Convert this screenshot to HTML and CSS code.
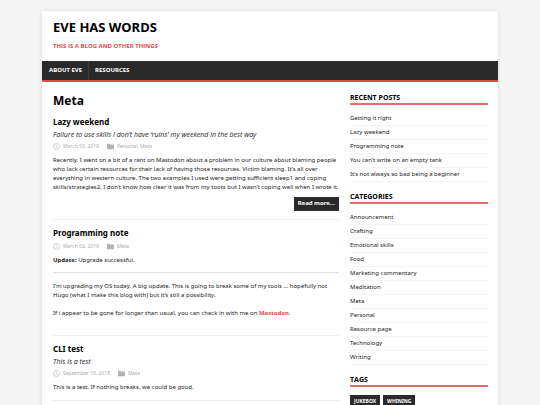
FILE: index.html
```html
<!DOCTYPE html>
<html lang="en">
<head>
    <meta charset="UTF-8">
    <meta name="viewport" content="width=device-width, initial-scale=1">
    <title>Meta - Eve has words</title>
    <link rel="stylesheet" href="styles.css">
</head>
<body>
    <svg class="sprite" aria-hidden="true">
        <symbol id="icon-time" viewBox="0 0 16 16">
            <circle cx="8" cy="8" r="7" fill="none" stroke="currentColor" stroke-width="1.4"/>
            <path d="M7.5 3.5v5l3.5 2" fill="none" stroke="currentColor" stroke-width="1.4"/>
        </symbol>
        <symbol id="icon-folder" viewBox="0 0 16 16">
            <path d="M0 2.5a1 1 0 0 1 1-1h5l1.5 2H15a1 1 0 0 1 1 1v9a1 1 0 0 1-1 1H1a1 1 0 0 1-1-1z" fill="currentColor"/>
        </symbol>
    </svg>

    <div class="container">
        <header class="header">
            <a class="logo" href="/">
                <div class="logo_title">Eve has words</div>
                <div class="logo_tagline">This is a blog and other things</div>
            </a>
            <nav class="menu">
                <a class="menu_link" href="/about/">About Eve</a>
                <a class="menu_link" href="/resources/">Resources</a>
            </nav>
        </header>

        <div class="wrapper">
            <main class="main">
                <h1 class="main_title">Meta</h1>

                <article class="post">
                    <h2 class="post_title"><a href="/lazy-weekend/">Lazy weekend</a></h2>
                    <p class="post_lead">Failure to use skills I don’t have ‘ruins’ my weekend in the best way</p>
                    <div class="meta">
                        <span class="meta_item"><svg class="icon"><use href="#icon-time"/></svg><time datetime="2019-03-10">March 10, 2019</time></span>
                        <span class="meta_item"><svg class="icon"><use href="#icon-folder"/></svg><span><a href="/personal/">Personal</a>, <a href="/meta/">Meta</a></span></span>
                    </div>
                    <div class="content">Recently, I went on a bit of a rant on Mastodon about a problem in our culture about blaming people who lack certain resources for their lack of having those resources. Victim blaming. It’s all over everything in western culture. The two examples I used were getting sufficient sleep1 and coping skills/strategies2. I don’t know how clear it was from my toots but I wasn’t coping well when I wrote it.</div>
                    <div class="more"><a class="btn" href="/lazy-weekend/">Read more…</a></div>
                </article>

                <article class="post">
                    <h2 class="post_title"><a href="/programming-note/">Programming note</a></h2>
                    <div class="meta">
                        <span class="meta_item"><svg class="icon"><use href="#icon-time"/></svg><time datetime="2019-03-02">March 02, 2019</time></span>
                        <span class="meta_item"><svg class="icon"><use href="#icon-folder"/></svg><a href="/meta/">Meta</a></span>
                    </div>
                    <div class="content content_note">
                        <p><strong>Update:</strong> Upgrade successful.</p>
                        <hr>
                        <p>I’m upgrading my OS today. A big update. This is going to break some of my tools … hopefully not Hugo (what I make this blog with) but it’s still a possibility.</p>
                        <p>If i appear to be gone for longer than usual, you can check in with me on <a href="https://mastodon.social/">Mastodon</a>.</p>
                    </div>
                </article>

                <article class="post">
                    <h2 class="post_title"><a href="/cli-test/">CLI test</a></h2>
                    <p class="post_lead">This is a test</p>
                    <div class="meta">
                        <span class="meta_item"><svg class="icon"><use href="#icon-time"/></svg><time datetime="2018-09-10">September 10, 2018</time></span>
                        <span class="meta_item"><svg class="icon"><use href="#icon-folder"/></svg><a href="/meta/">Meta</a></span>
                    </div>
                    <div class="content">This is a test. If nothing breaks, we could be good.</div>
                </article>
            </main>

            <aside class="sidebar">
                <section class="widget">
                    <h4 class="widget_title">Recent Posts</h4>
                    <ul class="widget_list">
                        <li><a href="#">Getting it right</a></li>
                        <li><a href="#">Lazy weekend</a></li>
                        <li><a href="#">Programming note</a></li>
                        <li><a href="#">You can’t write on an empty tank</a></li>
                        <li><a href="#">It’s not always so bad being a beginner</a></li>
                    </ul>
                </section>
                <section class="widget">
                    <h4 class="widget_title">Categories</h4>
                    <ul class="widget_list">
                        <li><a href="#">Announcement</a></li>
                        <li><a href="#">Crafting</a></li>
                        <li><a href="#">Emotional skills</a></li>
                        <li><a href="#">Food</a></li>
                        <li><a href="#">Marketing commentary</a></li>
                        <li><a href="#">Meditation</a></li>
                        <li><a href="#">Meta</a></li>
                        <li><a href="#">Personal</a></li>
                        <li><a href="#">Resource page</a></li>
                        <li><a href="#">Technology</a></li>
                        <li><a href="#">Writing</a></li>
                    </ul>
                </section>
                <section class="widget">
                    <h4 class="widget_title">Tags</h4>
                    <div class="tags">
                        <a class="tag" href="#">jukebox</a>
                        <a class="tag" href="#">whining</a>
                    </div>
                </section>
            </aside>
        </div>
    </div>
</body>
</html>
```
FILE: styles.css
```css
* {
    box-sizing: border-box;
}
html {
    scrollbar-width: none;
}
body {
    margin: 0;
    padding: 11px 0;
    background: #f5f5f5;
    color: #222;
    font-family: "Noto Sans", "Open Sans", sans-serif;
    font-size: 6px;
    line-height: 9px;
}
h1, h2, h4, p, ul {
    margin: 0;
    padding: 0;
}
a {
    color: inherit;
    text-decoration: none;
}
.sprite {
    display: none;
}
.container {
    max-width: 456px;
    margin: 0 auto;
    background: #fff;
    box-shadow: 0 0 4px rgba(0, 0, 0, 0.12);
}

/* Header */
.logo {
    display: inline-block;
    padding: 6px 11px 10px;
    font-weight: 700;
    text-transform: uppercase;
}
.logo_title {
    color: #000;
    font-size: 13px;
    line-height: 21px;
    border-bottom: 1px solid #f8f8f8;
}
.logo_tagline {
    padding-top: 3px;
    color: #e64946;
    font-family: "Open Sans", sans-serif;
    font-size: 6px;
    line-height: 9px;
}
.header {
    display: flex;
    flex-direction: column;
    align-items: flex-start;
}
.menu {
    display: flex;
    align-self: stretch;
    background: #2a2a2a;
    border-bottom: 2px solid #e64946;
}
.menu_link {
    padding: 5px 6px 5px 7px;
    color: #fff;
    font-weight: 700;
    text-transform: uppercase;
}
.menu_link + .menu_link {
    padding-left: 6px;
    border-left: 1px solid #3c3c3c;
}

/* Layout */
.wrapper {
    display: grid;
    grid-template-columns: 286fr 138fr;
    gap: 11px;
    padding: 11px 10px 11px 11px;
}
.main_title {
    color: #000;
    font-size: 12px;
    line-height: 16px;
}

/* Posts */
.post {
    padding: 6px 0 8px;
    border-bottom: 1px solid #ebebeb;
}
.post_title {
    color: #000;
    font-size: 8px;
    line-height: 14px;
}
.post_lead {
    font-family: "Open Sans", sans-serif;
    font-size: 7px;
    font-style: italic;
    line-height: 11px;
}
.meta {
    display: flex;
    gap: 8px;
    padding: 2px 0 5px;
    color: #aaa;
    font-size: 5px;
}
.meta_item {
    display: flex;
    align-items: center;
    gap: 3px;
}
.icon {
    width: 7px;
    height: 7px;
    color: #b4b4b4;
}
.content hr {
    margin: 7px 0 9px;
    border: 0;
    border-top: 1px solid #e0e0e0;
}
.content p + p {
    margin-top: 9px;
}
.content_note {
    padding-bottom: 9px;
}
.content a {
    color: #e64946;
    font-weight: 700;
}
.more {
    display: flex;
    justify-content: flex-end;
    margin-top: 5px;
}
.btn {
    padding: 2px 4px 3px;
    background: #2a2a2a;
    color: #fff;
    font-weight: 700;
}

/* Sidebar */
.widget {
    margin-bottom: 10px;
}
.widget_title {
    margin-bottom: 7px;
    padding-bottom: 1px;
    border-bottom: 2px solid #de6e6c;
    color: #000;
    font-family: "Open Sans", sans-serif;
    font-size: 7px;
    line-height: 9px;
    text-transform: uppercase;
}
.widget_list {
    list-style: none;
}
.widget_list li {
    padding: 2px 0;
    border-bottom: 1px solid #f4f4f4;
}
.tags {
    display: flex;
    flex-wrap: wrap;
    gap: 3px;
    padding-top: 1px;
}
.tag {
    padding: 2px 4px;
    background: #2a2a2a;
    color: #fff;
    font-size: 5px;
    font-weight: 700;
    text-transform: uppercase;
}
```
